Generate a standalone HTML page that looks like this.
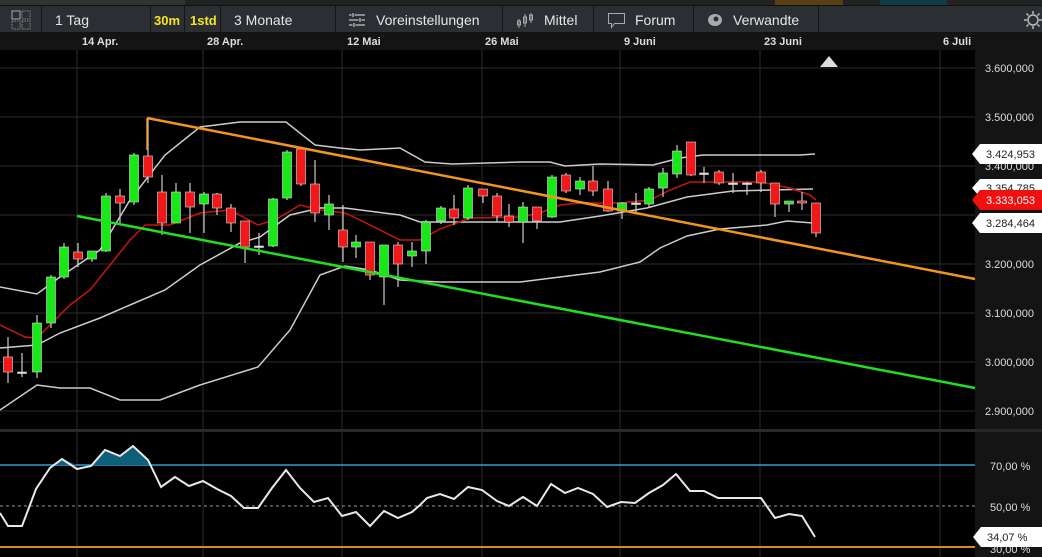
<!DOCTYPE html>
<html><head><meta charset="utf-8"><style>
*{margin:0;padding:0;box-sizing:border-box}
body{width:1042px;height:557px;overflow:hidden;background:#000;font-family:"Liberation Sans",sans-serif;position:relative}
.top{position:absolute;left:0;top:0;width:1042px;height:6px;background:#222}
.tb{position:absolute;left:0;top:5px;width:1042px;height:28px;background:#2b2e32;border-top:1px solid #111;border-bottom:1px solid #111}
.tb span{position:absolute;top:6px;font-size:14px;color:#e6e6e6}
.sep{position:absolute;top:0;width:1px;height:28px;background:#151515}
.dates{position:absolute;left:0;top:33px;width:1042px;height:17px;background:#141414}
.dates span{position:absolute;top:3px;font-size:11px;color:#ddd;font-weight:bold}
.axis{position:absolute;left:975px;top:50px;width:67px;height:507px;background:#141414}
.ax{position:absolute;left:985px;font-size:11px;color:#ddd}
</style></head><body>
<div class="top"><div style="position:absolute;left:0;top:0;width:185px;height:5px;background:#333"></div><div style="position:absolute;left:775px;top:0;width:68px;height:5px;background:#5a3f15"></div><div style="position:absolute;left:880px;top:0;width:67px;height:5px;background:#0e3b44"></div></div>
<div class="tb">
<svg style="position:absolute;left:11px;top:4px" width="20" height="20"><g fill="none" stroke="#888" stroke-dasharray="1.5 1"><rect x="1" y="1" width="8" height="8" stroke="#aaa" stroke-dasharray="none"/><rect x="11" y="1" width="8" height="8"/><rect x="1" y="11" width="8" height="8"/><rect x="11" y="11" width="8" height="8"/></g></svg>
<div class="sep" style="left:41px"></div>
<span style="left:55px">1 Tag</span>
<div class="sep" style="left:150px"></div>
<span style="left:154px;color:#f5e61a;font-weight:bold;font-size:13px;top:7px">30m</span>
<div class="sep" style="left:184px"></div>
<span style="left:190px;color:#f5e61a;font-weight:bold;font-size:13px;top:7px">1std</span>
<div class="sep" style="left:220px"></div>
<span style="left:234px">3 Monate</span>
<div class="sep" style="left:335px"></div>
<svg style="position:absolute;left:348px;top:6px" width="18" height="16" stroke="#aaa" stroke-width="1.5"><path d="M1 3h16M1 8h16M1 13h16"/><path d="M5 0v6M12 5v6M6 10v6" stroke="#2b2e32" stroke-width="3"/><path d="M5 1v4M12 6v4M6 11v4"/></svg>
<span style="left:376px">Voreinstellungen</span>
<div class="sep" style="left:502px"></div>
<svg style="position:absolute;left:516px;top:5px" width="18" height="18" stroke="#aaa" fill="none"><path d="M3 8v9M9 3v13M15 2v10"/><rect x="1.5" y="10" width="3" height="4"/><rect x="7.5" y="6" width="3" height="6"/><rect x="13.5" y="4" width="3" height="5"/></svg>
<span style="left:544px">Mittel</span>
<div class="sep" style="left:593px"></div>
<svg style="position:absolute;left:607px;top:6px" width="20" height="18" fill="none" stroke="#aaa"><path d="M1.5 1.5h16v10h-10l-3 4v-4h-3z"/></svg>
<span style="left:635px">Forum</span>
<div class="sep" style="left:693px"></div>
<svg style="position:absolute;left:706px;top:6px" width="18" height="16"><ellipse cx="9" cy="8" rx="7" ry="6" fill="#aaa"/><circle cx="10" cy="7" r="2.5" fill="#2b2e32"/></svg>
<span style="left:733px">Verwandte</span>
<div class="sep" style="left:818px"></div>
<svg style="position:absolute;left:1022px;top:4px" width="20" height="20" fill="none" stroke="#bbb" stroke-width="1.5"><circle cx="11" cy="10" r="5"/><path d="M11 1v3M11 16v3M2 10h3M17 10h3M4.5 3.5l2 2M15.5 14.5l2 2M4.5 16.5l2-2M15.5 5.5l2-2"/></svg>
</div>
<div class="dates">
<span style="left:82px">14 Apr.</span><span style="left:207px">28 Apr.</span><span style="left:347px">12 Mai</span><span style="left:485px">26 Mai</span><span style="left:624px">9 Juni</span><span style="left:764px">23 Juni</span><span style="left:943px">6 Juli</span>
</div>
<div class="axis"></div>
<svg id="c" style="position:absolute;left:0;top:0" width="1042" height="557">
<g stroke="#2c2c2c" stroke-width="1">
<path d="M77 50V557M203 50V557M342 50V557M482 50V557M620 50V557M760 50V557M940 50V557"/>
<path d="M0 68H975M0 117H975M0 166H975M0 215H975M0 264H975M0 313H975M0 362H975M0 411H975"/>
</g>
<rect x="0" y="429" width="975" height="3" fill="#2a2a2a"/>
<rect x="975" y="429" width="67" height="3" fill="#262626"/>
<path d="M820 67l9-11 9 11z" fill="#ddd"/>
<g id="bands" fill="none" stroke-width="1.5">
<polyline stroke="#ccc" points="0,287 37,294 60,277 100,250 130,200 165,155 200,127 240,122 286,122 315,145 340,148 360,150 400,148 425,162 452,164 520,162 550,162 565,166 600,164 653,165 680,158 703,155 800,155 815,154"/>
<polyline stroke="#ccc" points="0,348 37,345 60,333 100,318 130,305 165,290 200,265 240,243 260,237 290,215 320,208 345,208 400,215 420,222 560,222 600,216 647,208 687,197 733,191 813,189"/>
<polyline stroke="#ccc" points="0,410 37,385 60,388 90,388 120,400 160,400 200,385 258,367 290,330 320,275 345,266 370,270 400,280 440,282 520,282 600,272 640,262 660,248 687,236 720,229 767,225 787,221 813,223"/>
<polyline stroke="#c81414" points="0,325 25,337 37,338 55,320 70,305 90,290 110,265 130,240 145,225 170,225 200,213 230,210 258,225 275,220 300,205 320,210 345,213 360,220 400,240 420,240 440,229 470,218 520,217 540,213 560,205 580,203 620,203 650,200 670,190 690,182 760,182 790,188 810,195 816,200"/>
</g>
<g id="cs"></g>
<line x1="147" y1="118" x2="975" y2="279" stroke="#f0961e" stroke-width="2.5"/>
<line x1="147" y1="118" x2="147" y2="150" stroke="#f0961e" stroke-width="1.5"/>
<line x1="77" y1="216" x2="975" y2="388" stroke="#22dd22" stroke-width="2.5"/>
<line x1="0" y1="465" x2="975" y2="465" stroke="#2aa0d6" stroke-width="1.5"/>
<line x1="0" y1="506" x2="975" y2="506" stroke="#999" stroke-dasharray="3 3"/>
<line x1="0" y1="547" x2="975" y2="547" stroke="#d98a1e" stroke-width="2"/>
<path d="M55,465 62,459 77,465Z M92,465 105,450 120,456 133,446 148,460 152,465Z" fill="#0f5f7a"/>
<polyline fill="none" stroke="#e8e8e8" stroke-width="2" points="0,513 8,526 22,526 36,489 50,468 62,459 77,469 91,466 105,450 120,456 133,446 148,460 161,487 175,477 189,486 203,481 217,489 231,496 244,508 258,508 272,488 286,470 300,488 314,502 328,498 342,516 356,512 370,526 384,511 398,518 412,512 420,505 427,498 440,494 454,499 468,487 482,490 497,501 509,506 523,497 537,506 551,484 565,493 578,488 593,494 607,507 621,502 635,503 649,493 663,485 676,474 690,491 704,491 718,498 761,498 775,518 789,514 802,516 815,537"/>
<g font-size="11" fill="#ddd" font-family="Liberation Sans,sans-serif">
<text x="985" y="72">3.600,000</text><text x="985" y="121">3.500,000</text><text x="985" y="170">3.400,000</text><text x="985" y="268">3.200,000</text><text x="985" y="317">3.100,000</text><text x="985" y="366">3.000,000</text><text x="985" y="415">2.900,000</text>
<text x="990" y="470">70,00 %</text><text x="990" y="511">50,00 %</text><text x="990" y="553">30,00 %</text>
</g>
<g font-size="11" font-family="Liberation Sans,sans-serif">
<path d="M980 144h62v20h-62l-8-10z" fill="#fff"/><text x="986" y="158" fill="#222">3.424,953</text>
<path d="M980 179h62v18h-62l-8-9z" fill="#fff"/><text x="986" y="192" fill="#222">3.354,785</text>
<path d="M980 190h62v20h-62l-8-10z" fill="#f01010"/><text x="986" y="204" fill="#fff">3.333,053</text>
<path d="M980 213h62v20h-62l-8-10z" fill="#fff"/><text x="986" y="227" fill="#222">3.284,464</text>
<path d="M981 527h61v20h-61l-8-10z" fill="#fff"/><text x="987" y="541" fill="#222">34,07 %</text>
</g>
</svg>
<script>
var C=[
[8,'r',357,372,337,383],[22,'d',372,372,353,377],[37,'g',323,372,315,378],[51,'g',277,323,275,328],[64,'g',247,277,243,279],[78,'r',252,259,243,267],[92,'g',251,259,251,262],[106,'g',196,251,193,252],[120,'r',196,203,189,223],[134,'g',155,202,153,205],[148,'r',156,177,117,183],[162,'r',192,223,175,235],[176,'g',192,223,183,223],[190,'r',192,207,183,233],[204,'g',194,204,192,233],[217,'r',194,208,193,215],[231,'r',208,223,204,232],[245,'r',221,247,221,263],[259,'d',246,246,233,255],[273,'g',199,246,198,247],[287,'g',152,198,150,200],[301,'r',149,184,149,186],[315,'r',184,213,160,222],[329,'g',204,215,195,230],[343,'r',230,247,205,262],[356,'g',242,247,235,258],[370,'r',242,275,242,280],[384,'g',245,277,245,305],[398,'r',245,264,242,287],[412,'g',251,256,242,267],[426,'g',222,251,220,264],
[441,'g',208,221,206,224],[454,'r',209,218,195,225],[468,'g',188,218,185,220],[483,'r',189,196,189,203],[497,'r',196,216,193,222],[509,'r',216,222,204,227],[523,'g',207,222,202,243],[537,'r',207,221,207,229],[552,'g',177,217,175,218],[566,'r',175,191,173,193],[580,'g',181,189,177,195],[593,'r',181,191,166,196],[608,'r',189,211,181,212],[622,'g',203,211,202,219],[636,'d',203,203,193,213],[649,'g',189,204,187,208],[663,'g',173,188,168,197],[677,'g',151,174,145,178],[691,'r',142,175,142,176],[704,'d',173,173,167,183],[719,'r',172,183,170,185],[733,'d',183,183,173,193],[747,'d',183,183,182,195],[761,'r',172,183,170,192],[775,'r',183,204,183,217],[789,'g',201,204,201,212],[802,'r',201,203,192,210],[816,'r',203,233,203,237]];
var s='';C.forEach(function(c){var x=c[0],col=c[1]=='g'?'#18e818':c[1]=='r'?'#f01818':'#ddd';
s+='<line x1="'+x+'" y1="'+c[4]+'" x2="'+x+'" y2="'+c[5]+'" stroke="#ccc" stroke-width="1.2"/>';
var h=Math.max(c[3]-c[2],1.5);s+='<rect x="'+(x-4.5)+'" y="'+c[2]+'" width="9" height="'+h+'" fill="'+col+'" stroke="#ddd" stroke-width="0.6"/>';});
document.getElementById('cs').innerHTML=s;
</script>
</body></html>
